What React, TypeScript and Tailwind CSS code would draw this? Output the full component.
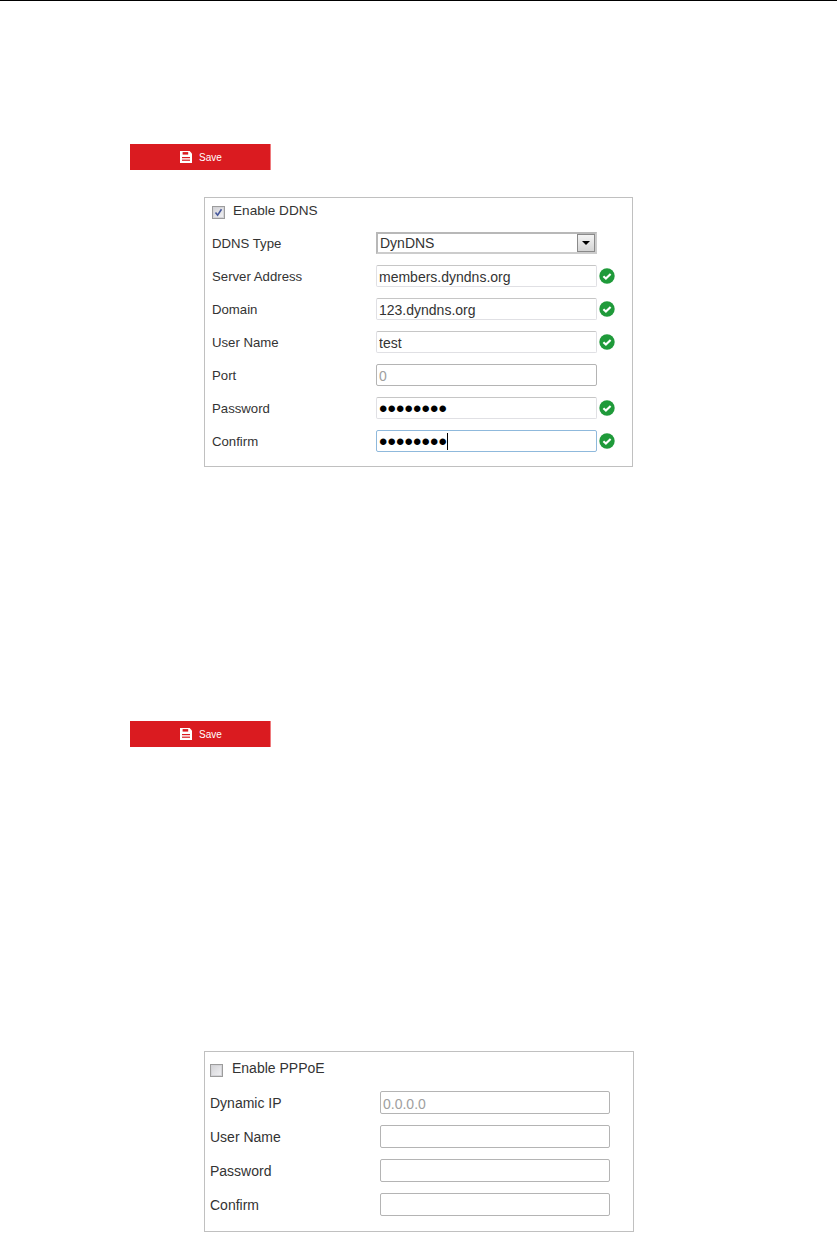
import React from 'react';

function SaveIcon() {
  return (
    <svg width="12" height="12" viewBox="0 0 12 12" className="shrink-0">
      <path d="M0 0H9.6L12 2.4V12H0Z" fill="#fff" />
      <rect x="2.6" y="1.1" width="5.6" height="2.5" fill="#da1b20" />
      <rect x="2" y="6" width="8" height="1.2" fill="#da1b20" />
      <rect x="2" y="8.6" width="8" height="1.2" fill="#da1b20" />
    </svg>
  );
}

function SaveButton({ className }: { className: string }) {
  return (
    <button className={`flex h-[26px] w-[141px] items-center justify-center gap-[7px] border-r border-[#ee7a7d] bg-[#da1b20] pl-[2px] text-[10px] text-white ${className}`}>
      <SaveIcon />
      <span>Save</span>
    </button>
  );
}

function OkIcon() {
  return (
    <svg width="16" height="16" viewBox="0 0 16 16" className="ml-[2px] shrink-0">
      <circle cx="8" cy="8" r="7.7" fill="#1f9a3a" />
      <path d="M4.4 8.2L6.9 10.6L11.6 6" fill="none" stroke="#fff" strokeWidth="2.1" />
    </svg>
  );
}

function Checkbox({ checked }: { checked?: boolean }) {
  return (
    <span className="mt-[4px] flex h-[13px] w-[13px] shrink-0 items-center justify-center border border-[#9c9c9c] bg-gradient-to-br from-[#d2d2d6] to-[#f2f2f4] shadow-[inset_0_0_0_1px_#d4d4d8]">
      {checked && (
        <svg width="9" height="9" viewBox="0 0 9 9">
          <path d="M1.5 4.5L3.6 7.2L7.5 1.2" fill="none" stroke="#46589c" strokeWidth="1.6" />
        </svg>
      )}
    </span>
  );
}

function TextInput({ value, width, tone = 'soft', disabled }: { value?: string; width: string; tone?: 'soft' | 'hard'; disabled?: boolean }) {
  const border = tone === 'soft' ? 'border-[#e0e0e4] border-t-[#c6c6c6]' : 'border-[#b4b4b4]';
  return (
    <input
      readOnly
      value={value ?? ''}
      className={`h-full ${width} rounded-[2px] border ${border} px-[2px] pt-[2px] text-[14px] outline-none ${disabled ? 'text-[#a0a0a0]' : 'text-[#333333]'}`}
    />
  );
}

function PasswordInput({ focused }: { focused?: boolean }) {
  return (
    <div className={`flex h-full w-[221px] items-center rounded-[2px] border pl-[2px] ${focused ? 'border-[#8fb9dc]' : 'border-[#e0e0e4] border-t-[#c6c6c6]'}`}>
      <span className="pt-[2px] text-[24px] leading-none tracking-[0.1px] text-black">••••••••</span>
      {focused && <span className="h-[17px] w-px bg-black" />}
    </div>
  );
}

function Row({ label, labelWidth, labelText, height, children }: { label: string; labelWidth: string; labelText: string; height: string; children: React.ReactNode }) {
  return (
    <div className={`flex ${height} items-center`}>
      <span className={`${labelWidth} ${labelText} shrink-0 pt-[2px] text-[#333333]`}>{label}</span>
      {children}
    </div>
  );
}

export default function App() {
  const ddnsRow = 'h-[22px]';
  const ddnsLabel = 'w-[164px]';
  const ddnsText = 'text-[13.2px]';
  const pppoeRow = 'h-[23px]';
  const pppoeLabel = 'w-[170px]';
  const pppoeText = 'text-[14px]';

  return (
    <div className="h-[1233px] w-[837px] overflow-hidden bg-white font-['Liberation_Sans',Arial,sans-serif]">
      <div className="h-px w-full bg-black" />

      <SaveButton className="ml-[130px] mt-[143px]" />

      {/* DDNS panel */}
      <div className="ml-[204px] mt-[27px] flex w-[429px] flex-col gap-[11px] border border-[#c0c0c0] pb-[14px] pl-[7px] pt-px">
        <div className={`flex ${ddnsRow} items-center gap-[8px]`}>
          <Checkbox checked />
          <span className="mt-[3px] text-[13.6px] text-[#333333]">Enable DDNS</span>
        </div>
        <Row label="DDNS Type" labelWidth={ddnsLabel} labelText={ddnsText} height={ddnsRow}>
          <div className="flex h-full w-[221px] items-center justify-between border-2 border-[#b8b8b8] border-r-[#cccccc] border-b-[#cccccc] pl-[2px] text-[14px] text-[#333333]">
            <span>DynDNS</span>
            <span className="flex h-full w-[18px] items-center justify-center border border-[#8a8a8a] bg-gradient-to-b from-[#f4f4f4] to-[#d4d4d4]">
              <span className="h-0 w-0 border-x-[4px] border-t-[4px] border-x-transparent border-t-black" />
            </span>
          </div>
        </Row>
        <Row label="Server Address" labelWidth={ddnsLabel} labelText={ddnsText} height={ddnsRow}>
          <TextInput value="members.dyndns.org" width="w-[221px]" />
          <OkIcon />
        </Row>
        <Row label="Domain" labelWidth={ddnsLabel} labelText={ddnsText} height={ddnsRow}>
          <TextInput value="123.dyndns.org" width="w-[221px]" />
          <OkIcon />
        </Row>
        <Row label="User Name" labelWidth={ddnsLabel} labelText={ddnsText} height={ddnsRow}>
          <TextInput value="test" width="w-[221px]" />
          <OkIcon />
        </Row>
        <Row label="Port" labelWidth={ddnsLabel} labelText={ddnsText} height={ddnsRow}>
          <TextInput value="0" width="w-[221px]" tone="hard" disabled />
        </Row>
        <Row label="Password" labelWidth={ddnsLabel} labelText={ddnsText} height={ddnsRow}>
          <PasswordInput />
          <OkIcon />
        </Row>
        <Row label="Confirm" labelWidth={ddnsLabel} labelText={ddnsText} height={ddnsRow}>
          <PasswordInput focused />
          <OkIcon />
        </Row>
      </div>

      <SaveButton className="ml-[130px] mt-[254px]" />

      {/* PPPoE panel */}
      <div className="ml-[204px] mt-[304px] flex w-[430px] flex-col gap-[11px] border border-[#c0c0c0] pb-[15px] pl-[5px] pt-[5px]">
        <div className={`flex ${pppoeRow} items-center gap-[9px]`}>
          <Checkbox />
          <span className={`${pppoeText} text-[#333333]`}>Enable PPPoE</span>
        </div>
        <Row label="Dynamic IP" labelWidth={pppoeLabel} labelText={pppoeText} height={pppoeRow}>
          <TextInput value="0.0.0.0" width="w-[230px]" tone="hard" disabled />
        </Row>
        <Row label="User Name" labelWidth={pppoeLabel} labelText={pppoeText} height={pppoeRow}>
          <TextInput width="w-[230px]" tone="hard" />
        </Row>
        <Row label="Password" labelWidth={pppoeLabel} labelText={pppoeText} height={pppoeRow}>
          <TextInput width="w-[230px]" tone="hard" />
        </Row>
        <Row label="Confirm" labelWidth={pppoeLabel} labelText={pppoeText} height={pppoeRow}>
          <TextInput width="w-[230px]" tone="hard" />
        </Row>
      </div>
    </div>
  );
}
